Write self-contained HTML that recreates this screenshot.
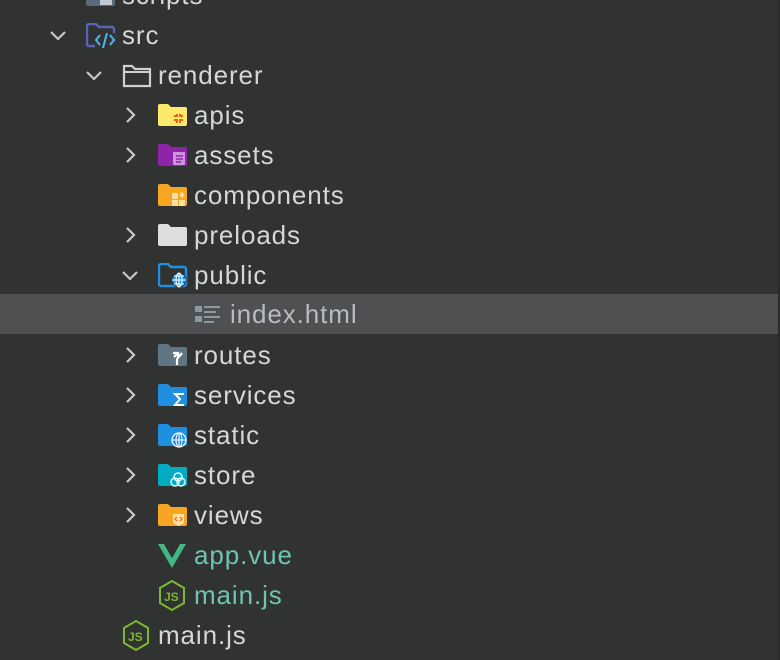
<!DOCTYPE html>
<html><head><style>
body{margin:0;width:780px;height:660px;background:#313332;overflow:hidden;font-family:"Liberation Sans",sans-serif;position:relative}
.r{position:absolute;left:0;width:778px;height:40px}
.sel{background:#4e5052}
.t{position:absolute;top:6px;font-size:26px;letter-spacing:0.9px;color:#d6d6d6;line-height:28px;white-space:nowrap}
.ch{position:absolute;top:11px}
.ic{position:absolute;top:8px}
.edge{position:absolute;right:0;top:0;width:2px;height:660px;background:#2b2b2b}
</style></head><body>
<svg width="0" height="0" style="position:absolute"><defs>
<path id="fold" d="M0 3a2 2 0 0 1 2-2h8l3 3h14a2 2 0 0 1 2 2v15a2 2 0 0 1-2 2H2a2 2 0 0 1-2-2z"/>
<path id="cd" d="M2 6l7 7 7-7" fill="none" stroke="#c8c8c8" stroke-width="2.2"/>
<path id="cr" d="M6 2l7 7-7 7" fill="none" stroke="#c8c8c8" stroke-width="2.2"/>
</defs></svg>

<div class="r" style="top:-25px"><svg class="ic" style="left:86px" width="30" height="24"><use href="#fold" fill="#5a6a77"/><rect x="14" y="10" width="12" height="12" fill="#c0c8cf"/></svg><div class="t" style="left:122px">scripts</div></div>

<div class="r" style="top:15px"><svg class="ch" style="left:49px" width="18" height="18"><use href="#cd"/></svg>
<svg class="ic" style="left:86px" width="32" height="28"><path d="M1 3a2 2 0 0 1 2-2h7l3 3h13a2 2 0 0 1 2 2v15a2 2 0 0 1-2 2H3a2 2 0 0 1-2-2z" fill="none" stroke="#5b63b8" stroke-width="2.4"/><rect x="9" y="10" width="20" height="16" fill="#313332"/><path d="M14 12l-4 5 4 5M24 12l4 5-4 5M21 10l-4 15" fill="none" stroke="#4db6f0" stroke-width="2"/></svg>
<div class="t" style="left:122px">src</div></div>

<div class="r" style="top:55px"><svg class="ch" style="left:85px" width="18" height="18"><use href="#cd"/></svg>
<svg class="ic" style="left:122px" width="32" height="28"><path d="M2 3h8l3 3h15v17H2z" fill="none" stroke="#cfcfcf" stroke-width="2.2"/><path d="M2 9h26" stroke="#cfcfcf" stroke-width="2"/></svg>
<div class="t" style="left:158px">renderer</div></div>

<div class="r" style="top:95px"><svg class="ch" style="left:121px" width="18" height="18"><use href="#cr"/></svg>
<svg class="ic" style="left:158px" width="32" height="28"><use href="#fold" fill="#fde96c"/><path d="M16 13h3v-2M25 13h-3v-2M16 17h3v3M25 17h-3v3" fill="none" stroke="#e8651d" stroke-width="2"/></svg>
<div class="t" style="left:194px">apis</div></div>

<div class="r" style="top:135px"><svg class="ch" style="left:121px" width="18" height="18"><use href="#cr"/></svg>
<svg class="ic" style="left:158px" width="32" height="28"><use href="#fold" fill="#8e24aa"/><rect x="15" y="9" width="12" height="13" rx="1" fill="#ce93d8"/><path d="M18 13h7M18 16h7M18 19h5" stroke="#8e24aa" stroke-width="1.5"/></svg>
<div class="t" style="left:194px">assets</div></div>

<div class="r" style="top:175px">
<svg class="ic" style="left:158px" width="32" height="28"><use href="#fold" fill="#f6a623"/><rect x="14" y="10" width="6" height="6" fill="#ffe0a0"/><rect x="14" y="17" width="6" height="6" fill="#ffe0a0"/><rect x="21" y="17" width="6" height="6" fill="#ffe0a0"/><path d="M24 9l3 3-3 3-3-3z" fill="#ffe0a0"/></svg>
<div class="t" style="left:194px">components</div></div>

<div class="r" style="top:215px"><svg class="ch" style="left:121px" width="18" height="18"><use href="#cr"/></svg>
<svg class="ic" style="left:158px" width="32" height="28"><use href="#fold" fill="#dedede"/></svg>
<div class="t" style="left:194px">preloads</div></div>

<div class="r" style="top:255px"><svg class="ch" style="left:121px" width="18" height="18"><use href="#cd"/></svg>
<svg class="ic" style="left:158px" width="32" height="28"><path d="M1 3a2 2 0 0 1 2-2h7l3 3h13a2 2 0 0 1 2 2v15a2 2 0 0 1-2 2H3a2 2 0 0 1-2-2z" fill="none" stroke="#1e8fe1" stroke-width="2.4"/><circle cx="21" cy="17" r="7" fill="#1e8fe1" stroke="#313332" stroke-width="1"/><path d="M14 17h14M21 10v14M16 13h10M16 21h10" stroke="#fff" stroke-width="1"/><ellipse cx="21" cy="17" rx="3" ry="7" fill="none" stroke="#fff" stroke-width="1"/></svg>
<div class="t" style="left:194px">public</div></div>

<div class="r sel" style="top:294px">
<svg class="ic" style="left:194px" width="30" height="26"><rect x="1" y="4" width="7" height="6" fill="#8a99a6"/><rect x="1" y="14" width="7" height="6" fill="#8a99a6"/><path d="M10 5h16M10 10h12M10 15h16M10 20h10" stroke="#8a99a6" stroke-width="2"/></svg>
<div class="t" style="left:230px;color:#b8bcc0">index.html</div></div>

<div class="r" style="top:335px"><svg class="ch" style="left:121px" width="18" height="18"><use href="#cr"/></svg>
<svg class="ic" style="left:158px" width="32" height="28"><use href="#fold" fill="#5f7582"/><path d="M15 10h5v5M20 10l-4 4M19 22v-6l5-6" fill="none" stroke="#fff" stroke-width="2.2"/></svg>
<div class="t" style="left:194px">routes</div></div>

<div class="r" style="top:375px"><svg class="ch" style="left:121px" width="18" height="18"><use href="#cr"/></svg>
<svg class="ic" style="left:158px" width="32" height="28"><use href="#fold" fill="#1e8fe1"/><path d="M26 11h-9l5 5-5 6h9" fill="none" stroke="#fff" stroke-width="2"/></svg>
<div class="t" style="left:194px">services</div></div>

<div class="r" style="top:415px"><svg class="ch" style="left:121px" width="18" height="18"><use href="#cr"/></svg>
<svg class="ic" style="left:158px" width="32" height="28"><use href="#fold" fill="#1e8fe1"/><circle cx="21" cy="17" r="7" fill="#1e8fe1" stroke="#fff" stroke-width="1.2"/><path d="M14 17h14M21 10v14" stroke="#fff" stroke-width="1"/><ellipse cx="21" cy="17" rx="3" ry="7" fill="none" stroke="#fff" stroke-width="1"/></svg>
<div class="t" style="left:194px">static</div></div>

<div class="r" style="top:455px"><svg class="ch" style="left:121px" width="18" height="18"><use href="#cr"/></svg>
<svg class="ic" style="left:158px" width="32" height="28"><use href="#fold" fill="#00acc1"/><g fill="none" stroke="#e0f7fa" stroke-width="1.5"><circle cx="20" cy="14" r="4"/><circle cx="17" cy="19" r="4"/><circle cx="23" cy="19" r="4"/></g></svg>
<div class="t" style="left:194px">store</div></div>

<div class="r" style="top:495px"><svg class="ch" style="left:121px" width="18" height="18"><use href="#cr"/></svg>
<svg class="ic" style="left:158px" width="32" height="28"><use href="#fold" fill="#f6a623"/><path d="M15 11h11v9l-5.5 3-5.5-3z" fill="#ffe0a0"/><path d="M19 14l-2 2 2 2M22 14l2 2-2 2" fill="none" stroke="#e8651d" stroke-width="1.2"/></svg>
<div class="t" style="left:194px">views</div></div>

<div class="r" style="top:535px">
<svg class="ic" style="left:158px" width="30" height="26"><path d="M0 1h6l8 14 8-14h6L14 25z" fill="#41b883"/><path d="M6 1h4l4 7 4-7h4l-8 14z" fill="#313332"/></svg>
<div class="t" style="left:194px;color:#6fc3b0">app.vue</div></div>

<div class="r" style="top:575px">
<svg class="ic" style="left:158px;top:5px" width="30" height="32"><path d="M14 1l12 7v15l-12 7-12-7V8z" fill="none" stroke="#7cb82f" stroke-width="2"/><text x="6" y="21" font-size="12" font-family="Liberation Sans" fill="#7cb82f" font-weight="bold">JS</text></svg>
<div class="t" style="left:194px;color:#6fc3b0">main.js</div></div>

<div class="r" style="top:615px">
<svg class="ic" style="left:122px;top:5px" width="30" height="32"><path d="M14 1l12 7v15l-12 7-12-7V8z" fill="none" stroke="#7cb82f" stroke-width="2"/><text x="6" y="21" font-size="12" font-family="Liberation Sans" fill="#7cb82f" font-weight="bold">JS</text></svg>
<div class="t" style="left:158px">main.js</div></div>

<div class="edge"></div>
</body></html>
